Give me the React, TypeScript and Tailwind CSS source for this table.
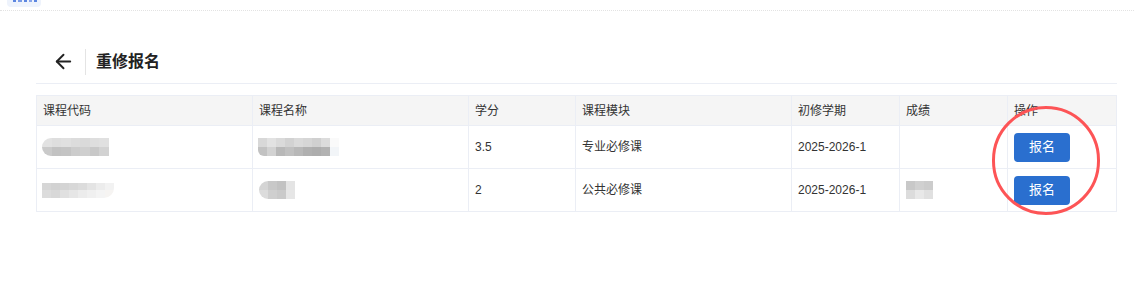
import { ArrowLeft } from 'lucide-react';

type BlurProps = {
  top: string[];
  bottom: string[];
  cell?: number;
  h?: number;
  className?: string;
};

// pixelated placeholder for the masked cells
const Blur = ({ top, bottom, cell = 9, h = 9, className = '' }: BlurProps) => (
  <div className={`inline-flex flex-col overflow-hidden ${className}`}>
    <div className="flex">
      {top.map((c, i) => (
        <span key={i} style={{ background: c, width: cell, height: h }} />
      ))}
    </div>
    <div className="flex">
      {bottom.map((c, i) => (
        <span key={i} style={{ background: c, width: cell, height: h }} />
      ))}
    </div>
  </div>
);

const COLS = 'grid grid-cols-[216px_216px_107px_216px_108px_108px_108px]';

const headers = ['课程代码', '课程名称', '学分', '课程模块', '初修学期', '成绩', '操作'];

const App = () => {
  return (
    <div className="relative h-[282px] w-[1134px] bg-white font-['Liberation_Sans','Noto_Sans_CJK_SC',sans-serif] text-[#333]">
      <div className="h-[11px] border-b border-dotted border-[#e3e3e3]">
        {/* tag scrolled mostly out of view: only the bottom of its glyphs shows */}
        <div className="ml-[7px] flex h-[7px] w-[34px] items-start gap-[2px] rounded-b-[4px] bg-[#eef3fc] pl-[6px]">
          <span className="h-[2px] w-[3px] bg-[#5b85e0]" />
          <span className="h-[2px] w-[4px] bg-[#7a9be6]" />
          <span className="h-[2px] w-[3px] bg-[#5b85e0]" />
          <span className="h-[2px] w-[3px] bg-[#8aa6ea]" />
          <span className="h-[2px] w-[3px] bg-[#5b85e0]" />
        </div>
      </div>

      <div className="ml-[36px] mt-[29px] flex h-[44px] w-[1081px] items-center border-b border-[#ebeef5]">
        <button type="button" aria-label="返回" className="ml-[16px] text-[#222]">
          <ArrowLeft className="h-[23px] w-[23px]" strokeWidth={2} />
        </button>
        <div className="ml-[10px] h-[26px] w-px bg-[#e4e4e4]" />
        <h1 className="ml-[10px] text-[16px] font-bold text-[#222]">重修报名</h1>
      </div>

      <div className="ml-[36px] mt-[11px] w-[1081px] border border-[#ebeef5] text-[12px]">
        <div className={`${COLS} h-[30px] border-b border-[#ebeef5] bg-[#f5f5f5]`}>
          {headers.map((h, i) => (
            <div
              key={h}
              className={`flex items-center pl-[6px] ${i < 6 ? 'border-r border-[#ebeef5]' : ''}`}
            >
              {h}
            </div>
          ))}
        </div>

        <div className={`${COLS} h-[43px] border-b border-[#ebeef5]`}>
          <div className="flex items-center border-r border-[#ebeef5] pl-[5px]">
            <Blur
              className="rounded-l-full rounded-r-[6px]"
              top={['#e2e2e2', '#dedede', '#e0e0e0', '#dcdcdc', '#dadada', '#dedede', '#e0e0e0']}
              bottom={['#cacaca', '#c2c2c2', '#c4c4c4', '#cccccc', '#cfcfcf', '#c8c8c8', '#d2d2d2']}
              cell={9.5}
            />
          </div>
          <div className="flex items-center border-r border-[#ebeef5] pl-[5px]">
            <Blur
              className="rounded-bl-[6px]"
              top={['#d8d8d8', '#e2e2e2', '#dadada', '#d2d2d2', '#dadada', '#d6d6d6', '#d0d0d0', '#dcdcdc', '#fafafa']}
              bottom={['#c2c2c2', '#d2d2d2', '#b8b8b8', '#c0c0c0', '#b8b8b8', '#b0b0b0', '#adadad', '#b2b2b2', '#f2f5f8']}
            />
          </div>
          <div className="flex items-center border-r border-[#ebeef5] pl-[6px]">3.5</div>
          <div className="flex items-center border-r border-[#ebeef5] pl-[6px]">专业必修课</div>
          <div className="flex items-center border-r border-[#ebeef5] pl-[6px]">2025-2026-1</div>
          <div className="flex items-center border-r border-[#ebeef5] pl-[6px]" />
          <div className="flex items-center pl-[6px]">
            <button
              type="button"
              className="h-[29px] w-[56px] rounded-[4px] bg-[#2a6fcf] text-[13px] text-white"
            >
              报名
            </button>
          </div>
        </div>

        <div className={`${COLS} h-[42px]`}>
          <div className="flex items-center border-r border-[#ebeef5] pl-[5px]">
            <Blur
              className="rounded-br-[10px]"
              top={['#d6d6d6', '#d2d2d2', '#d4d4d4', '#d8d8d8', '#dcdcdc', '#e4e4e4', '#ececec', '#f2f2f2']}
              bottom={['#dcdcdc', '#d8d8d8', '#e0e0e0', '#e6e6e6', '#ececec', '#f0f0f0', '#f4f4f4', '#f6f4f2']}
              h={7.5}
            />
          </div>
          <div className="flex items-center border-r border-[#ebeef5] pl-[6px]">
            <Blur
              className="rounded-l-full"
              top={['#d4d4d4', '#c8c8c8', '#c2c2c2', '#e4e4e4']}
              bottom={['#dcdcdc', '#cfcfcf', '#cacaca', '#e6e6e6']}
            />
          </div>
          <div className="flex items-center border-r border-[#ebeef5] pl-[6px]">2</div>
          <div className="flex items-center border-r border-[#ebeef5] pl-[6px]">公共必修课</div>
          <div className="flex items-center border-r border-[#ebeef5] pl-[6px]">2025-2026-1</div>
          <div className="flex items-center border-r border-[#ebeef5] pl-[6px]">
            <Blur
              top={['#c8c8c8', '#d0d0d0', '#cccccc']}
              bottom={['#dcdcdc', '#e8e8e8', '#e0e0e0']}
            />
          </div>
          <div className="flex items-center pl-[6px]">
            <button
              type="button"
              className="h-[29px] w-[56px] rounded-[4px] bg-[#2a6fcf] text-[13px] text-white"
            >
              报名
            </button>
          </div>
        </div>
      </div>

      <div className="pointer-events-none absolute left-[992px] top-[106px] h-[109px] w-[108px] rounded-full border-[3px] border-[#fd5456]" />
    </div>
  );
};

export default App;
